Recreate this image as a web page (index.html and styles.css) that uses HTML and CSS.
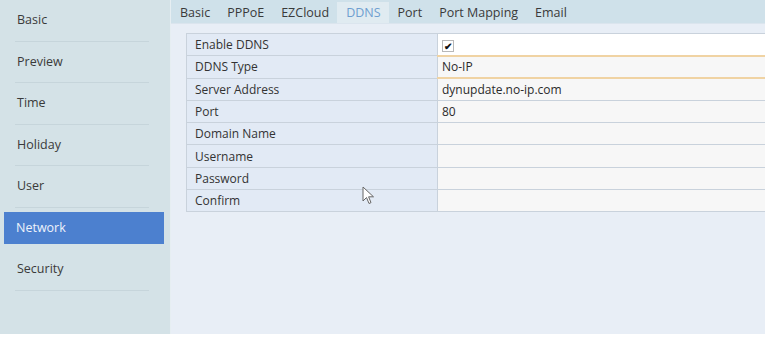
FILE: index.html
```html
<!DOCTYPE html>
<html lang="en">
<head>
  <meta charset="UTF-8">
  <title>Network - DDNS</title>
  <link rel="stylesheet" href="styles.css">
</head>
<body>

  <div class="app">
    <ul class="side-menu">
      <li>Basic</li>
      <li>Preview</li>
      <li>Time</li>
      <li>Holiday</li>
      <li>User</li>
      <li class="active">Network</li>
      <li>Security</li>
    </ul>

    <div class="main">
      <div class="tabs">
        <span class="tab">Basic</span>
        <span class="tab">PPPoE</span>
        <span class="tab">EZCloud</span>
        <span class="tab selected">DDNS</span>
        <span class="tab">Port</span>
        <span class="tab">Port Mapping</span>
        <span class="tab">Email</span>
      </div>

      <div class="content">
        <table class="form-table">
          <tr>
            <td class="label">Enable DDNS</td>
            <td class="value"><span class="check">&#10004;</span></td>
          </tr>
          <tr>
            <td class="label">DDNS Type</td>
            <td class="value focus">No-IP</td>
          </tr>
          <tr>
            <td class="label">Server Address</td>
            <td class="value">dynupdate.no-ip.com</td>
          </tr>
          <tr>
            <td class="label">Port</td>
            <td class="value">80</td>
          </tr>
          <tr>
            <td class="label">Domain Name</td>
            <td class="value"></td>
          </tr>
          <tr>
            <td class="label">Username</td>
            <td class="value"></td>
          </tr>
          <tr>
            <td class="label">Password</td>
            <td class="value"></td>
          </tr>
          <tr>
            <td class="label">Confirm</td>
            <td class="value"></td>
          </tr>
        </table>

        <!-- mouse pointer -->
        <svg class="cursor" width="14" height="20" viewBox="0 0 14 20">
          <path d="M1 1 L1 15 L4.5 11.5 L7 17.5 L9 16.6 L6.6 10.8 L11.5 10.8 Z" fill="#fff" stroke="#666" stroke-width="1" stroke-linejoin="round"/>
        </svg>
      </div>
    </div>
  </div>

</body>
</html>
```

FILE: styles.css
```css
* { margin: 0; padding: 0; box-sizing: border-box; }
body {
  background: #fff;
  font-family: 'Open Sans', 'Noto Sans', sans-serif;
  font-size: 12px;
  color: #333;
}
.app {
  display: flex;
  width: 765px;
  height: 334px;
  overflow: hidden;
}

/* left menu */
.side-menu {
  list-style: none;
  width: 171px;
  flex-shrink: 0;
  background: #d4e2e7;
  border-right: 1px solid #e6eef2;
  padding: 0 6px 0 4px;
}
.side-menu li {
  height: 41.5px;
  line-height: 40px;
  padding-left: 13px;
  font-size: 12.5px;
  color: #3a3a3a;
  position: relative;
}
.side-menu li::after {
  content: "";
  position: absolute;
  left: 11px;
  right: 15px;
  bottom: 0;
  border-bottom: 1px solid #c6d5db;
}
.side-menu li.active {
  background: #4c80cf;
  color: #eef3fb;
  height: 32px;
  line-height: 32px;
  margin: 4.5px 0 5px;
  padding-left: 12px;
}
.side-menu li.active::after { display: none; }

/* right side */
.main {
  flex: 1;
  display: flex;
  flex-direction: column;
  background: #e8eef6;
}
.tabs {
  height: 24px;
  background: #cfe1ea;
  display: flex;
  align-items: flex-end;
  border-bottom: 1px solid #dbe5ee;
}
.tab {
  height: 21px;
  line-height: 21px;
  padding: 0 8px 0 9px;
  font-size: 12.5px;
  color: #3a3a3a;
}
.tab.selected {
  background: #e0ebf1;
  color: #6f9fd0;
}

.content {
  flex: 1;
  padding: 9px 0 0 15px;
  position: relative;
}
.form-table {
  width: 100%;
  border-collapse: collapse;
}
.form-table td {
  height: 22.3px;
  border: 1px solid #c9d2dc;
  padding: 0 8px;
  white-space: nowrap;
}
.form-table td.label {
  width: 251px;
  background: #e2eaf5;
  color: #333;
}
.form-table td.value {
  background: #f7f7f7;
  padding-left: 4px;
  border-right: none;
  color: #2b2b2b;
}
.form-table tr:first-child td.value { background: #fff; }
.form-table td.focus {
  border-top: 2px solid #f0d3a3;
  border-bottom: 2px solid #f0d3a3;
}
.check {
  display: inline-block;
  width: 12px;
  height: 12px;
  border: 1px solid #b8b8b8;
  background: #fff;
  font-size: 10px;
  font-weight: bold;
  line-height: 10px;
  text-align: center;
  color: #111;
  vertical-align: middle;
}
.cursor {
  position: absolute;
  left: 191px;
  top: 162px;
}
```
